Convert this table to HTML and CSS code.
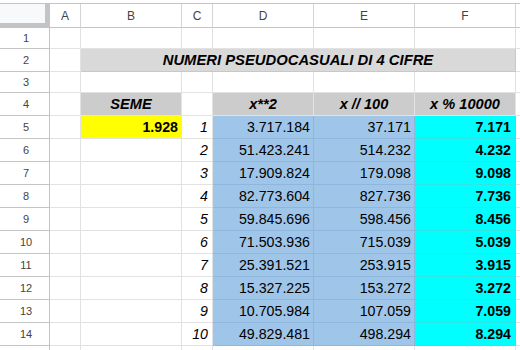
FILE: index.html
```html
<!DOCTYPE html>
<html lang="it">
<head>
    <meta charset="UTF-8">
    <meta name="viewport" content="width=device-width, initial-scale=1.0">
    <title>Numeri pseudocasuali</title>
    <link rel="stylesheet" href="styles.css">
</head>
<body>
    <div class="sheet">
        <!-- column headers -->
        <div class="corner"><div class="corner-box"></div></div>
        <div class="col-head">A</div>
        <div class="col-head">B</div>
        <div class="col-head">C</div>
        <div class="col-head">D</div>
        <div class="col-head">E</div>
        <div class="col-head">F</div>
        <div class="col-head"></div>

        <!-- row 1 -->
        <div class="row-head">1</div>
        <div class="cell"></div><div class="cell"></div><div class="cell"></div>
        <div class="cell"></div><div class="cell"></div><div class="cell"></div><div class="cell"></div>

        <!-- row 2 -->
        <div class="row-head">2</div>
        <div class="cell"></div>
        <div class="cell title">NUMERI PSEUDOCASUALI DI 4 CIFRE</div>
        <div class="cell"></div>

        <!-- row 3 -->
        <div class="row-head">3</div>
        <div class="cell"></div><div class="cell"></div><div class="cell"></div>
        <div class="cell"></div><div class="cell"></div><div class="cell"></div><div class="cell"></div>

        <!-- row 4 -->
        <div class="row-head">4</div>
        <div class="cell"></div>
        <div class="cell head">SEME</div>
        <div class="cell"></div>
        <div class="cell head">x**2</div>
        <div class="cell head">x // 100</div>
        <div class="cell head">x % 10000</div>
        <div class="cell"></div>

        <div class="row-head">5</div>
        <div class="cell"></div><div class="cell seed">1.928</div><div class="cell idx">1</div>
        <div class="cell blue">3.717.184</div><div class="cell blue">37.171</div><div class="cell cyan">7.171</div><div class="cell"></div>

        <div class="row-head">6</div>
        <div class="cell"></div><div class="cell"></div><div class="cell idx">2</div>
        <div class="cell blue">51.423.241</div><div class="cell blue">514.232</div><div class="cell cyan">4.232</div><div class="cell"></div>

        <div class="row-head">7</div>
        <div class="cell"></div><div class="cell"></div><div class="cell idx">3</div>
        <div class="cell blue">17.909.824</div><div class="cell blue">179.098</div><div class="cell cyan">9.098</div><div class="cell"></div>

        <div class="row-head">8</div>
        <div class="cell"></div><div class="cell"></div><div class="cell idx">4</div>
        <div class="cell blue">82.773.604</div><div class="cell blue">827.736</div><div class="cell cyan">7.736</div><div class="cell"></div>

        <div class="row-head">9</div>
        <div class="cell"></div><div class="cell"></div><div class="cell idx">5</div>
        <div class="cell blue">59.845.696</div><div class="cell blue">598.456</div><div class="cell cyan">8.456</div><div class="cell"></div>

        <div class="row-head">10</div>
        <div class="cell"></div><div class="cell"></div><div class="cell idx">6</div>
        <div class="cell blue">71.503.936</div><div class="cell blue">715.039</div><div class="cell cyan">5.039</div><div class="cell"></div>

        <div class="row-head">11</div>
        <div class="cell"></div><div class="cell"></div><div class="cell idx">7</div>
        <div class="cell blue">25.391.521</div><div class="cell blue">253.915</div><div class="cell cyan">3.915</div><div class="cell"></div>

        <div class="row-head">12</div>
        <div class="cell"></div><div class="cell"></div><div class="cell idx">8</div>
        <div class="cell blue">15.327.225</div><div class="cell blue">153.272</div><div class="cell cyan">3.272</div><div class="cell"></div>

        <div class="row-head">13</div>
        <div class="cell"></div><div class="cell"></div><div class="cell idx">9</div>
        <div class="cell blue">10.705.984</div><div class="cell blue">107.059</div><div class="cell cyan">7.059</div><div class="cell"></div>

        <div class="row-head">14</div>
        <div class="cell"></div><div class="cell"></div><div class="cell idx">10</div>
        <div class="cell blue">49.829.481</div><div class="cell blue">498.294</div><div class="cell cyan">8.294</div><div class="cell"></div>

        <div class="row-head"></div>
        <div class="cell"></div><div class="cell"></div><div class="cell"></div>
        <div class="cell"></div><div class="cell"></div><div class="cell"></div><div class="cell"></div>
    </div>
</body>
</html>
```
FILE: styles.css
```css
html, body {
    margin: 0;
    height: 100%;
    overflow: hidden;
    background: #fff;
}
body {
    font-family: "Liberation Sans", Arial, sans-serif;
    color: #000;
}
.sheet {
    margin-top: 3px;
    border-top: 1px solid #c4c4c4;
    display: grid;
    grid-template-columns: 50px 31px 101px 31px 101px 101px 101px 1fr;
    grid-template-rows: 24px 21px 23px 21px repeat(12, 23px);
}
.corner {
    background: #c4c4c4;
}
.corner-box {
    width: 45px;
    height: 19px;
    background: #f8f9fa;
}
.col-head {
    box-sizing: border-box;
    border-right: 1px solid #d4d4d4;
    border-bottom: 1px solid #c4c4c4;
    display: flex;
    align-items: center;
    justify-content: center;
    font-size: 12px;
    color: #444;
}
.row-head {
    box-sizing: border-box;
    border-right: 1px solid #c4c4c4;
    border-bottom: 1px solid #c4c4c4;
    display: flex;
    align-items: center;
    justify-content: center;
    padding-left: 3px;
    font-size: 11px;
    color: #444;
}
.cell {
    box-sizing: border-box;
    border-right: 1px solid #e2e2e2;
    border-bottom: 1px solid #e2e2e2;
    display: flex;
    align-items: flex-end;
    justify-content: flex-end;
    padding: 0 3px 3px 3px;
    font-size: 14.2px;
    line-height: 16px;
    white-space: nowrap;
    overflow: hidden;
}
.title {
    grid-column: 3 / 8;
    justify-content: center;
    background: #d9d9d9;
    border-color: #c8c8c8;
    font-weight: bold;
    font-style: italic;
    font-size: 14.8px;
}
.head {
    justify-content: center;
    background: #cccccc;
    border-color: #e4e4e4;
    font-weight: bold;
    font-style: italic;
    font-size: 14.6px;
}
.seed {
    background: #ffff00;
    font-weight: bold;
}
.idx {
    font-style: italic;
    padding-right: 4px;
}
.blue {
    background: #9fc5e8;
    border-color: #8fb6dc;
}
.cyan {
    background: #00ffff;
    border-color: #2ee6e6;
    font-weight: bold;
    padding-right: 4px;
}
```
